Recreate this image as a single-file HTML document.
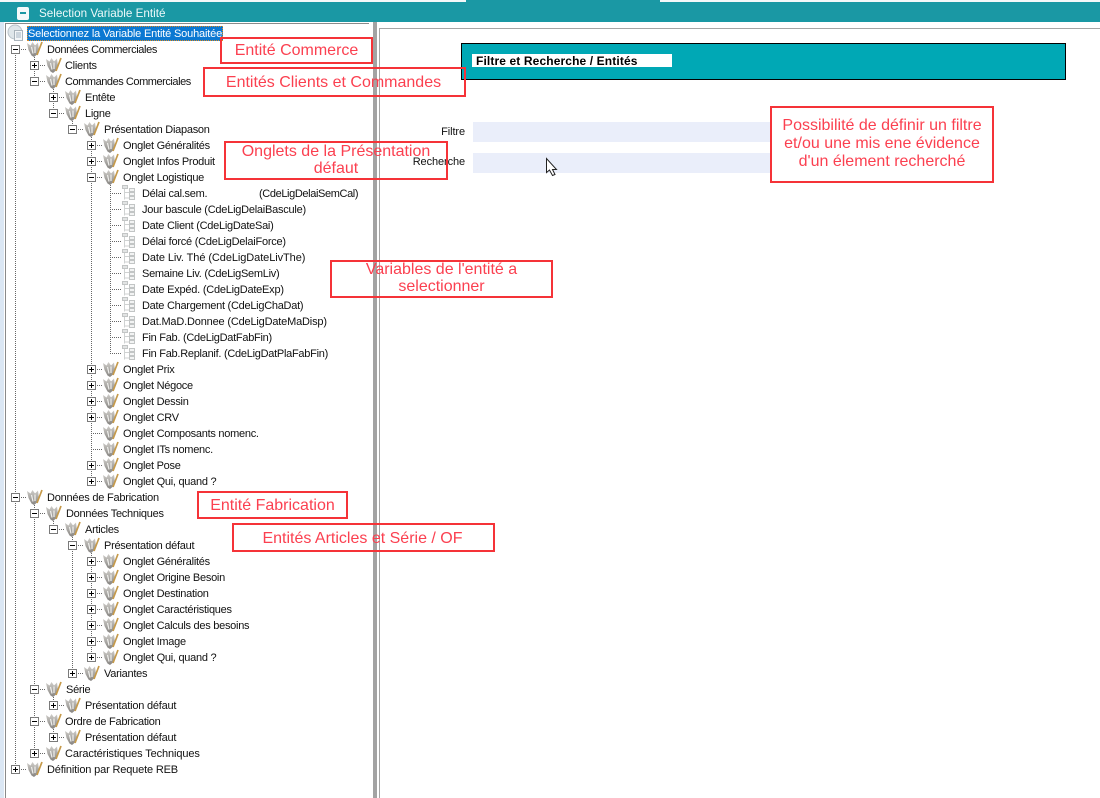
<!DOCTYPE html>
<html lang="fr"><head><meta charset="utf-8"><title>Selection Variable Entité</title>
<style>
html,body{margin:0;padding:0;background:#fff}
#p{position:relative;width:1100px;height:798px;overflow:hidden;background:#fff;font-family:"Liberation Sans",sans-serif}
.a{position:absolute}
.t{position:absolute;font-size:11px;letter-spacing:-.27px;line-height:16px;height:16px;white-space:nowrap;color:#111;margin-top:1px}
.b{position:absolute;border:2px solid #f53338;box-sizing:border-box}
.n{position:absolute;font-size:16px;color:#fb4050;text-align:center;white-space:nowrap}
svg{position:absolute;left:0;top:0}
</style></head><body><div id="p">
<div class="a" style="left:0;top:0;width:466px;height:2px;background:#f4f8f9"></div>
<div class="a" style="left:466px;top:0;width:194px;height:2px;background:#1a98a4"></div>
<div class="a" style="left:660px;top:0;width:440px;height:2px;background:#f4f8f9"></div>
<div class="a" style="left:0;top:2px;width:1100px;height:20px;background:#1a98a4"></div>
<div class="a" style="left:17px;top:7px;width:12px;height:13px;background:#f4fafb;border-radius:2px"></div>
<div class="a" style="left:20px;top:12px;width:6px;height:2px;background:#1a98a4"></div>
<div class="a" style="left:39px;top:6px;font-size:11.7px;line-height:16px;color:#eef9fa;white-space:nowrap">Selection Variable Entité</div>
<div class="a" style="left:0;top:22px;width:4px;height:776px;background:#dbe7f4"></div>
<div class="a" style="left:5px;top:23px;width:364px;height:775px;border-left:1px solid #8a8a8a;border-top:1px solid #8a8a8a;box-sizing:border-box"></div>
<div class="a" style="left:373px;top:22px;width:4px;height:776px;background:#a3a3a3"></div>
<div class="a" style="left:379px;top:28px;width:721px;height:770px;border-left:1px solid #a5a5a5;border-top:1px solid #a5a5a5;box-sizing:border-box"></div>

<svg width="1100" height="798" viewBox="0 0 1100 798">
<defs>
<linearGradient id="g" x1="0" y1="0" x2="0" y2="1"><stop offset="0" stop-color="#cfcdc9"/><stop offset="1" stop-color="#868481"/></linearGradient>
<symbol id="i" width="16" height="16" viewBox="0 0 16 16">
<path d="M0 2L3.500 4.500L5.500 1L8 4.500L11 1.500L12 9L9.500 14L7 16L4.500 14.500L1.500 9Z" fill="url(#g)"/>
<path d="M4.500 6L6 12.500M8 5.500V12" stroke="#efefec" stroke-width="1.200" fill="none"/>
<path d="M15 1L10 14" stroke="#c69a4a" stroke-width="1.700" fill="none"/>
</symbol>
<symbol id="l" width="16" height="16" viewBox="0 0 16 16">
<path d="M2.500 4V14.500M2.500 7.500H7M2.500 13H7" stroke="#cfd2d2" fill="none"/>
<rect x=".5" y=".5" width="5" height="3" fill="#e2e4e4" stroke="#c2c5c5"/>
<rect x="7.500" y="3.500" width="5" height="3" fill="#f2f3f3" stroke="#c2c5c5"/>
<rect x="7.500" y="7.500" width="5" height="3" fill="#f2f3f3" stroke="#c2c5c5"/>
<rect x="7.500" y="11.500" width="5" height="3" fill="#f2f3f3" stroke="#c2c5c5"/>
</symbol>
<symbol id="m" width="9" height="9" viewBox="0 0 9 9"><rect x=".5" y=".5" width="8" height="8" fill="#fff" stroke="#7a7a7a"/><path d="M2 4.500H7" stroke="#000"/></symbol>
<symbol id="q" width="9" height="9" viewBox="0 0 9 9"><rect x=".5" y=".5" width="8" height="8" fill="#fff" stroke="#7a7a7a"/><path d="M2 4.500H7M4.500 2V7" stroke="#000"/></symbol>
</defs>
<g stroke="#666" stroke-dasharray="1 1" fill="none">
<path d="M15.500 49V769M34.500 49V81M34.500 497V753M53.500 81V113M53.500 513V529M53.500 689V705M53.500 721V737M72.500 113V129M72.500 529V673M91.500 129V481M91.500 545V657"/>
<path d="M15 49.500H27M15 497.500H27M15 769.500H27"/>
<path d="M34 65.500H46M34 81.500H46M34 513.500H46M34 689.500H46M34 721.500H46M34 753.500H46"/>
<path d="M53 97.500H65M53 113.500H65M53 529.500H65M53 705.500H65M53 737.500H65"/>
<path d="M72 129.500H84M72 545.500H84M72 673.500H84"/>
<path d="M91 145.500H103M91 161.500H103M91 177.500H103M91 369.500H103M91 385.500H103M91 401.500H103M91 417.500H103M91 433.500H103M91 449.500H103M91 465.500H103M91 481.500H103M91 561.500H103M91 577.500H103M91 593.500H103M91 609.500H103M91 625.500H103M91 641.500H103M91 657.500H103"/>
<path d="M110 193.500H122M110 209.500H122M110 225.500H122M110 241.500H122M110 257.500H122M110 273.500H122M110 289.500H122M110 305.500H122M110 321.500H122M110 337.500H122M110 353.500H122M110.500 177V353"/>
</g>
<g>
<use href="#m" x="11" y="45"/><use href="#m" x="11" y="493"/><use href="#q" x="11" y="765"/>
<use href="#q" x="30" y="61"/><use href="#m" x="30" y="77"/><use href="#m" x="30" y="509"/><use href="#m" x="30" y="685"/><use href="#m" x="30" y="717"/><use href="#q" x="30" y="749"/>
<use href="#q" x="49" y="93"/><use href="#m" x="49" y="109"/><use href="#m" x="49" y="525"/><use href="#q" x="49" y="701"/><use href="#q" x="49" y="733"/>
<use href="#m" x="68" y="125"/><use href="#m" x="68" y="541"/><use href="#q" x="68" y="669"/>
<use href="#q" x="87" y="141"/><use href="#q" x="87" y="157"/><use href="#m" x="87" y="173"/>
<use href="#q" x="87" y="365"/><use href="#q" x="87" y="381"/><use href="#q" x="87" y="397"/><use href="#q" x="87" y="413"/><use href="#q" x="87" y="461"/><use href="#q" x="87" y="477"/>
<use href="#q" x="87" y="557"/><use href="#q" x="87" y="573"/><use href="#q" x="87" y="589"/><use href="#q" x="87" y="605"/><use href="#q" x="87" y="621"/><use href="#q" x="87" y="637"/><use href="#q" x="87" y="653"/>
</g>
<g>
<use href="#i" x="27" y="41"/><use href="#i" x="27" y="489"/><use href="#i" x="27" y="761"/>
<use href="#i" x="46" y="57"/><use href="#i" x="46" y="73"/><use href="#i" x="46" y="505"/><use href="#i" x="46" y="681"/><use href="#i" x="46" y="713"/><use href="#i" x="46" y="745"/>
<use href="#i" x="65" y="89"/><use href="#i" x="65" y="105"/><use href="#i" x="65" y="521"/><use href="#i" x="65" y="697"/><use href="#i" x="65" y="729"/>
<use href="#i" x="84" y="121"/><use href="#i" x="84" y="537"/><use href="#i" x="84" y="665"/>
<use href="#i" x="103" y="137"/><use href="#i" x="103" y="153"/><use href="#i" x="103" y="169"/>
<use href="#i" x="103" y="361"/><use href="#i" x="103" y="377"/><use href="#i" x="103" y="393"/><use href="#i" x="103" y="409"/><use href="#i" x="103" y="425"/><use href="#i" x="103" y="441"/><use href="#i" x="103" y="457"/><use href="#i" x="103" y="473"/>
<use href="#i" x="103" y="553"/><use href="#i" x="103" y="569"/><use href="#i" x="103" y="585"/><use href="#i" x="103" y="601"/><use href="#i" x="103" y="617"/><use href="#i" x="103" y="633"/><use href="#i" x="103" y="649"/>
<use href="#l" x="122" y="185"/><use href="#l" x="122" y="201"/><use href="#l" x="122" y="217"/><use href="#l" x="122" y="233"/><use href="#l" x="122" y="249"/><use href="#l" x="122" y="265"/><use href="#l" x="122" y="281"/><use href="#l" x="122" y="297"/><use href="#l" x="122" y="313"/><use href="#l" x="122" y="329"/><use href="#l" x="122" y="345"/>
</g>
<g>
<circle cx="15" cy="32" r="7" fill="#dfe6ea" stroke="#b8c2ca"/>
<rect x="14.500" y="30.500" width="8" height="10" fill="#f4f6f8" stroke="#a9b3bb"/>
<path d="M16 33h5M16 35h5M16 37h5" stroke="#a5b4c2"/>
</g>
</svg>

<div class="a" style="left:27px;top:26px;width:196px;height:15px;background:#0a78d2;outline:1px dotted #e08a20;outline-offset:-1px"></div>
<div class="t" style="left:28px;top:25px;color:#fff;letter-spacing:-.17px">Selectionnez la Variable Entité Souhaitée</div>
<div class="t" style="left:47px;top:41px;letter-spacing:-.37px">Données Commerciales</div>
<div class="t" style="left:65px;top:57px">Clients</div>
<div class="t" style="left:65px;top:73px;letter-spacing:-.45px">Commandes Commerciales</div>
<div class="t" style="left:85px;top:89px">Entête</div>
<div class="t" style="left:85px;top:105px">Ligne</div>
<div class="t" style="left:104px;top:121px">Présentation Diapason</div>
<div class="t" style="left:123px;top:137px">Onglet Généralités</div>
<div class="t" style="left:123px;top:153px">Onglet Infos Produit</div>
<div class="t" style="left:123px;top:169px">Onglet Logistique</div>
<div class="t" style="left:142px;top:185px">Délai cal.sem.</div>
<div class="t" style="left:259px;top:185px;letter-spacing:-.38px">(CdeLigDelaiSemCal)</div>
<div class="t" style="left:142px;top:201px;letter-spacing:-.24px">Jour bascule (CdeLigDelaiBascule)</div>
<div class="t" style="left:142px;top:217px">Date Client (CdeLigDateSai)</div>
<div class="t" style="left:142px;top:233px;letter-spacing:-.24px">Délai forcé (CdeLigDelaiForce)</div>
<div class="t" style="left:142px;top:249px;letter-spacing:-.08px">Date Liv. Thé (CdeLigDateLivThe)</div>
<div class="t" style="left:142px;top:265px">Semaine Liv. (CdeLigSemLiv)</div>
<div class="t" style="left:142px;top:281px;letter-spacing:-.23px">Date Expéd. (CdeLigDateExp)</div>
<div class="t" style="left:142px;top:297px">Date Chargement (CdeLigChaDat)</div>
<div class="t" style="left:142px;top:313px;letter-spacing:-.18px">Dat.MaD.Donnee (CdeLigDateMaDisp)</div>
<div class="t" style="left:142px;top:329px">Fin Fab. (CdeLigDatFabFin)</div>
<div class="t" style="left:142px;top:345px">Fin Fab.Replanif. (CdeLigDatPlaFabFin)</div>
<div class="t" style="left:123px;top:361px">Onglet Prix</div>
<div class="t" style="left:123px;top:377px">Onglet Négoce</div>
<div class="t" style="left:123px;top:393px">Onglet Dessin</div>
<div class="t" style="left:123px;top:409px">Onglet CRV</div>
<div class="t" style="left:123px;top:425px">Onglet Composants nomenc.</div>
<div class="t" style="left:123px;top:441px">Onglet ITs nomenc.</div>
<div class="t" style="left:123px;top:457px">Onglet Pose</div>
<div class="t" style="left:123px;top:473px">Onglet Qui, quand ?</div>
<div class="t" style="left:47px;top:489px;letter-spacing:-.22px">Données de Fabrication</div>
<div class="t" style="left:66px;top:505px">Données Techniques</div>
<div class="t" style="left:85px;top:521px">Articles</div>
<div class="t" style="left:104px;top:537px">Présentation défaut</div>
<div class="t" style="left:123px;top:553px">Onglet Généralités</div>
<div class="t" style="left:123px;top:569px">Onglet Origine Besoin</div>
<div class="t" style="left:123px;top:585px">Onglet Destination</div>
<div class="t" style="left:123px;top:601px">Onglet Caractéristiques</div>
<div class="t" style="left:123px;top:617px">Onglet Calculs des besoins</div>
<div class="t" style="left:123px;top:633px">Onglet Image</div>
<div class="t" style="left:123px;top:649px">Onglet Qui, quand ?</div>
<div class="t" style="left:104px;top:665px">Variantes</div>
<div class="t" style="left:66px;top:681px">Série</div>
<div class="t" style="left:85px;top:697px;letter-spacing:-.22px">Présentation défaut</div>
<div class="t" style="left:65px;top:713px">Ordre de Fabrication</div>
<div class="t" style="left:85px;top:729px;letter-spacing:-.22px">Présentation défaut</div>
<div class="t" style="left:65px;top:745px;letter-spacing:-.12px">Caractéristiques Techniques</div>
<div class="t" style="left:47px;top:761px;letter-spacing:-.16px">Définition par Requete REB</div>

<div class="a" style="left:461px;top:43px;width:605px;height:37px;background:#00a8b5;border:1px solid #000;box-sizing:border-box"></div>
<div class="a" style="left:472px;top:54px;width:200px;height:13px;background:#fff"></div>
<div class="a" style="left:476px;top:54px;font-size:12px;letter-spacing:.12px;font-weight:bold;line-height:15px;color:#000;white-space:nowrap">Filtre et Recherche / Entités</div>
<div class="a" style="left:473px;top:122px;width:298px;height:20px;background:#eaeefa"></div>
<div class="a" style="left:473px;top:153px;width:298px;height:20px;background:#eaeefa"></div>
<div class="t" style="left:365px;width:100px;text-align:right;top:123px;font-size:11px;letter-spacing:-.1px">Filtre</div>
<div class="t" style="left:365px;width:100px;text-align:right;top:153px;font-size:11px;letter-spacing:-.1px">Recherche</div>
<svg width="1100" height="798" viewBox="0 0 1100 798"><path d="M546.500 158.500V172.500L549.500 170L552.500 175.500L555 174.500L552.500 169.500H556.500Z" fill="#fff" stroke="#222"/></svg>

<div class="b" style="left:220px;top:37px;width:153px;height:27px"></div>
<div class="n" style="left:220px;top:42px;width:153px;line-height:18px">Entité Commerce</div>
<div class="b" style="left:203px;top:67px;width:263px;height:30px"></div>
<div class="n" style="left:202px;top:74px;width:263px;line-height:18px">Entités Clients et Commandes</div>
<div class="b" style="left:224px;top:141px;width:224px;height:39px"></div>
<div class="n" style="left:224px;top:143px;width:224px;line-height:17px">Onglets de la Présentation<br>défaut</div>
<div class="b" style="left:330px;top:260px;width:223px;height:38px"></div>
<div class="n" style="left:330px;top:261px;width:223px;line-height:17px">Variables de l'entité a<br>selectionner</div>
<div class="b" style="left:770px;top:106px;width:224px;height:77px"></div>
<div class="n" style="left:770px;top:117px;width:224px;line-height:18px">Possibilité de définir un filtre<br>et/ou une mis ene évidence<br>d'un élement recherché</div>
<div class="b" style="left:197px;top:491px;width:151px;height:28px"></div>
<div class="n" style="left:197px;top:497px;width:151px;line-height:18px">Entité Fabrication</div>
<div class="b" style="left:232px;top:523px;width:263px;height:29px"></div>
<div class="n" style="left:231px;top:530px;width:263px;line-height:18px">Entités Articles et Série / OF</div>
</div></body></html>
